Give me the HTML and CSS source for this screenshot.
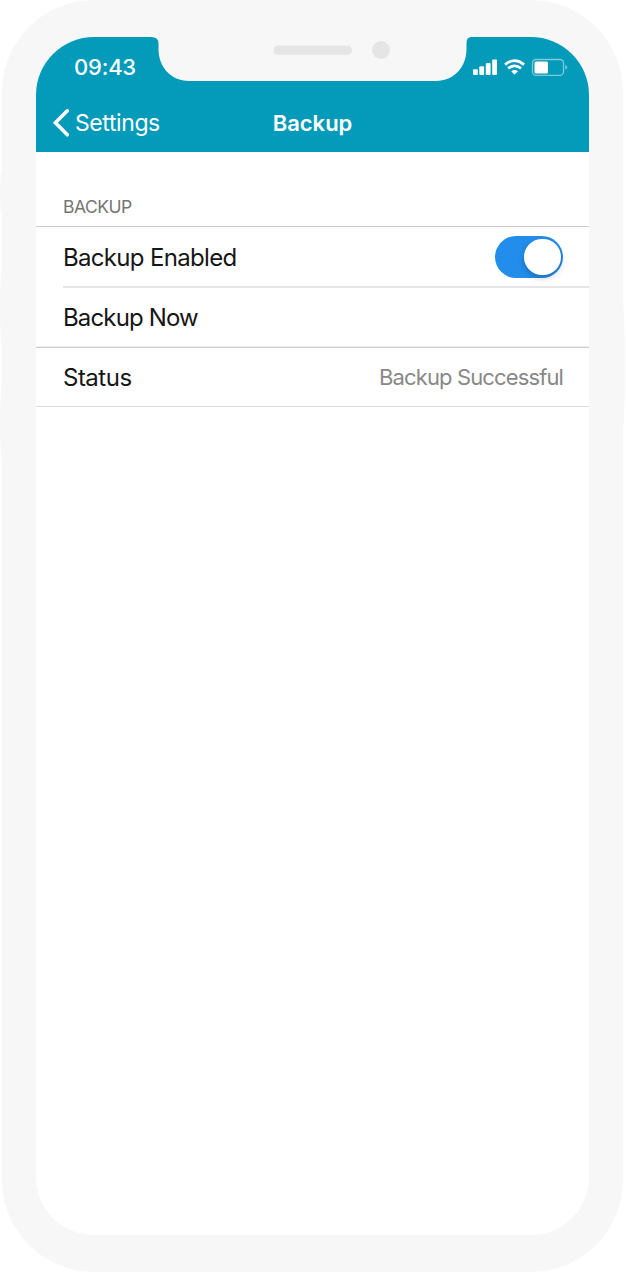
FILE: index.html
```html
<!DOCTYPE html>
<html lang="en">
<head>
<meta charset="utf-8">
<title>Backup</title>
<link rel="stylesheet" href="styles.css">
</head>
<body>
<div class="phone">
  <span class="side-button mute"></span>
  <span class="side-button volume-up"></span>
  <span class="side-button volume-down"></span>
  <span class="side-button power"></span>
  <main class="screen">
    <header class="header">
      <div class="status-bar">
        <span class="time">09:43</span>
        <svg class="status-icons" width="96" height="20" viewBox="0 0 96 20">
          <g fill="#fff">
            <rect x="1" y="11.2" width="4.8" height="5.8" rx="1"/>
            <rect x="7.3" y="8.3" width="4.8" height="8.7" rx="1"/>
            <rect x="13.8" y="5" width="4.8" height="12" rx="1"/>
            <rect x="20.2" y="1.5" width="4.8" height="15.5" rx="1"/>
            <path d="M39.2 13.2Q42.6 10.8 46 13.2L42.6 16.7Z"/>
            <rect x="62.5" y="3.5" width="13.5" height="12" rx="1.5"/>
          </g>
          <g fill="none" stroke="#fff" stroke-width="2.8">
            <path d="M33.1 6.6Q42.6-1.3 52.1 6.6"/>
            <path d="M36.2 10.4Q42.6 5.3 49 10.4"/>
          </g>
          <rect x="60.5" y="1.5" width="31" height="15.8" rx="3.5" fill="none" stroke="#fff" stroke-opacity=".48" stroke-width="1.3"/>
          <path d="M93.4 6.5Q97 9.3 93.4 12Z" fill="#fff" fill-opacity=".5"/>
        </svg>
      </div>
      <nav class="nav">
        <a class="back">
          <svg width="20" height="30" viewBox="0 0 20 30"><path d="M17.3 2.8 5.4 14.8 17.3 26.8" fill="none" stroke="#fff" stroke-width="3.6" stroke-linecap="round"/></svg>
          <span class="back-label">Settings</span>
        </a>
        <h1 class="title">Backup</h1>
      </nav>
    </header>
    <h2 class="section">BACKUP</h2>
    <div class="list">
      <div class="row inset"><span class="label enabled">Backup Enabled</span><span class="toggle"><span class="knob"></span></span></div>
      <div class="row last"><span class="label now">Backup Now</span></div>
      <div class="row status"><span class="label state">Status</span><span class="value">Backup Successful</span></div>
    </div>
  </main>
  <svg class="notch" width="320" height="46" viewBox="0 0 320 46">
    <path d="M0 0V2Q5.5 2 7.5 8V14C7.5 32 20 46 38 46H283C300 46 315.5 32 315.5 14V8Q315.5 2 319 2V0Z" fill="none"/>
    <path d="M0 0V2Q7.5 2 7.5 8V14C7.5 32 20 46 38 46H285C303 46 315.5 32 315.5 14V8Q315.5 2 320 2V0Z" fill="#f7f7f7"/>
    <rect x="122.5" y="10.5" width="78.5" height="9.3" rx="4.6" fill="#e5e5e5"/>
    <circle cx="230" cy="15" r="9" fill="#e5e5e5"/>
  </svg>
</div>
</body>
</html>
```
FILE: styles.css
```css
* { box-sizing: border-box; }
body { margin: 0; background: #fff; font-family: Inter, "Liberation Sans", sans-serif; overflow: hidden; }
.phone { position: relative; width: 621px; height: 1272px; margin-left: 2px; padding: 37px 34px; background: #f7f7f7; border-radius: 92px; }
.screen { height: 1198px; background: #fff; border-radius: 58px; overflow: hidden; }
.header { height: 115px; background: #049ab9; color: #fff; }
.notch { position: absolute; left: 149px; top: 35px; }
.side-button { position: absolute; background: #f7f7f7; left: -2px; width: 4px; border-radius: 100% 0 0 100% / 50%; }
.mute { top: 166px; height: 54px; }
.volume-up { top: 258px; height: 98px; }
.volume-down { top: 374px; height: 98px; }
.power { left: auto; right: -2px; top: 290px; height: 152px; border-radius: 0 100% 100% 0 / 50%; }
.status-bar { height: 56px; padding: 15px 21.5px 0 38px; display: flex; justify-content: space-between; }
.time { font-size: 22px; line-height: 30px; font-weight: 500; letter-spacing: -.2px; }
.status-icons { margin-top: 6px; }
.nav { height: 59px; display: grid; grid-template-columns: 1fr auto 1fr; align-items: center; }
.back { display: flex; align-items: center; padding-left: 14px; }
.back-label { margin-left: 5px; font-size: 23px; letter-spacing: -.4px; }
.title { margin: 0; font-size: 22px; font-weight: 600; letter-spacing: 0; }
.section { height: 74px; margin: 0; padding: 45px 27px 0; font-size: 17.5px; line-height: 20px; font-weight: 400; color: #757575; letter-spacing: -.5px; }
.list { border-top: 1px solid #cfcfcf; }
.row { position: relative; height: 60px; padding: 0 26px 0 27px; display: flex; align-items: center; justify-content: space-between; }
.label { font-size: 24px; color: #161616; letter-spacing: -.68px; }
.now { letter-spacing: -.85px; }
.state { letter-spacing: -.5px; }
.value { font-size: 22px; color: #888; letter-spacing: -.88px; }
.inset::after { content: ""; position: absolute; left: 27px; right: 0; bottom: -1px; height: 2px; background: #e6e6e6; }
.last { height: 61px; border-bottom: 1px solid #cecece; box-shadow: inset 0 -1px #eee; }
.status { height: 59px; border-bottom: 1px solid #dcdcdc; }
.toggle { width: 68.5px; height: 41.5px; padding: 2.5px; border-radius: 21px; background: #238deb; display: flex; justify-content: flex-end; }
.knob { width: 36.5px; height: 36.5px; border-radius: 50%; background: #fff; box-shadow: 0 3px 6px rgba(0,0,0,.22); }
```
